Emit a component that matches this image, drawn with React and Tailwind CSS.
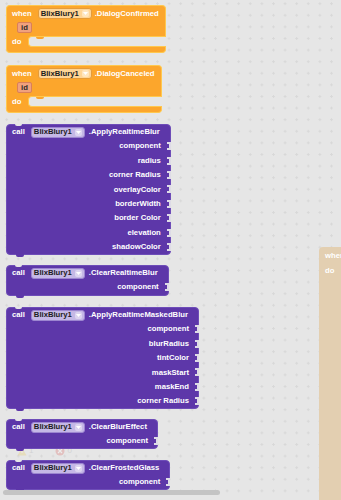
import React from 'react';

const Arrow = () => (
  <span className="ml-[3px] flex h-[7px] w-[7px] items-center justify-center rounded-[2px] bg-white/40">
    <svg width="5" height="3" viewBox="0 0 5 3">
      <path d="M0 0h5L2.5 3z" fill="#ffffff" />
    </svg>
  </span>
);

const Pill = ({ tone }) => (
  <span
    className={
      tone === 'orange'
        ? 'ml-[6px] inline-flex h-[11px] items-center rounded-[3px] border border-[#e49b3a] bg-[#ffd596] pl-[2px] pr-[2px]'
        : 'ml-[6px] inline-flex h-[11px] items-center rounded-[3px] border border-[#9c86d0] bg-[#c5b8e6] pl-[2px] pr-[2px]'
    }
  >
    <span className="text-[#1e1e1e]">BlixBlury1</span>
    <Arrow />
  </span>
);

const EventBlock = ({ event, className }) => (
  <div className={`inline-flex flex-col self-start ${className}`}>
    <div className="flex flex-col rounded-t-[4px] border border-b-0 border-[#ffc84e] bg-[#fca62c] pb-[3px] pl-[5px] pr-[6px] pt-[2px]">
      <div className="flex h-[11px] items-center whitespace-nowrap">
        <span>when</span>
        <Pill tone="orange" />
        <span className="ml-[3px]">{event}</span>
      </div>
      <div className="mt-[3px] flex h-[11px] items-center pl-[5px]">
        <span className="flex h-[11px] items-center rounded-[2px] border border-[#d97f5a] bg-[#f0a17d] px-[3px] text-[#2a2a2a]">
          id
        </span>
      </div>
    </div>
    <div className="flex h-[11px] bg-[#fca62c]">
      <div className="flex w-[22px] items-center border-l border-[#ffc84e] pl-[5px]">do</div>
      <div className="relative flex-1 rounded-l-[4px] border-y border-l border-[#ffc84e] bg-[#e6e6e6]">
        <div className="absolute left-[7px] top-0 h-[2px] w-[8px] rounded-b-full bg-[#fca62c]" />
      </div>
    </div>
    <div className="h-[6px] rounded-b-[4px] border border-t-0 border-[#ffc84e] bg-[#fca62c]" />
  </div>
);

const Socket = () => (
  <span className="-mr-[1px] flex h-[8px] w-[4px] items-center bg-[#dedbe6]">
    <span className="h-[4px] w-[2px] bg-[#5d37a9]" />
  </span>
);

const CallBlock = ({ method, params, className }) => (
  <div
    className={`relative inline-flex flex-col self-start rounded-[4px] border border-[#6e4db8] bg-[#5d37a9] ${className}`}
  >
    <div className="absolute -top-[1px] left-[8px] h-[2px] w-[7px] rounded-b-[2px] bg-[#e6e6e6]" />
    <div className="flex h-[14px] items-center whitespace-nowrap pl-[5px] pr-[10px]">
      <span>call</span>
      <Pill />
      <span className="ml-[4px]">{method}</span>
    </div>
    {params.map((p) => (
      <div key={p} className="flex h-[14.4px] items-center justify-end whitespace-nowrap">
        <span className="mr-[6px]">{p}</span>
        <Socket />
      </div>
    ))}
    <div className="absolute -bottom-[3px] left-[9px] h-[3px] w-[8px] rounded-b-[2px] bg-[#5d37a9]" />
  </div>
);

const Warnings = () => (
  <div className="absolute left-[17px] top-[446px] z-0 flex items-center gap-[22px] text-[8px] font-normal text-[#9a9a9a] opacity-25">
    <div className="flex items-center gap-[2px]">
      <svg width="10" height="9" viewBox="0 0 10 9">
        <path d="M5 0.5 9.5 8.5H0.5z" fill="#e8c447" />
        <rect x="4.5" y="3" width="1" height="3" fill="#fff" />
      </svg>
      <span>1</span>
    </div>
    <div className="flex items-center gap-[2px]">
      <svg width="10" height="10" viewBox="0 0 10 10">
        <circle cx="5" cy="5" r="4.5" fill="#d9534f" />
        <path d="M3 3l4 4M7 3l-4 4" stroke="#fff" strokeWidth="1.2" />
      </svg>
      <span>0</span>
    </div>
  </div>
);

export default function App() {
  return (
    <div className="relative h-[500px] w-[341px] overflow-hidden bg-[#e6e6e6] font-['Liberation_Sans',Arial,sans-serif] text-[7.7px] font-bold leading-none text-white">
      <svg className="absolute inset-0 h-full w-full" aria-hidden="true">
        <defs>
          <pattern id="grid" x="5.2" y="2.2" width="11.6" height="11.6" patternUnits="userSpaceOnUse">
            <rect x="0" y="1" width="3" height="1" fill="#d8d8d8" />
            <rect x="1" y="0" width="1" height="3" fill="#d8d8d8" />
          </pattern>
        </defs>
        <rect width="100%" height="100%" fill="url(#grid)" />
      </svg>

      <Warnings />

      <div className="absolute bottom-0 left-[319px] top-[247px] w-[40px] rounded-tl-[4px] bg-[#e3cfb1] pl-[6px] pt-[3px]">
        <div className="flex h-[11px] items-center">when</div>
        <div className="mt-[4px] flex h-[11px] items-center">do</div>
      </div>

      <div className="relative z-10 flex flex-col pl-[6px]">
        <EventBlock event=".DialogConfirmed" className="mt-[5px]" />
        <EventBlock event=".DialogCanceled" className="mt-[12px]" />
        <CallBlock
          className="mt-[11px]"
          method=".ApplyRealtimeBlur"
          params={[
            'component',
            'radius',
            'corner Radius',
            'overlayColor',
            'borderWidth',
            'border Color',
            'elevation',
            'shadowColor',
          ]}
        />
        <CallBlock className="mt-[10px]" method=".ClearRealtimeBlur" params={['component']} />
        <CallBlock
          className="mt-[11.6px]"
          method=".ApplyRealtimeMaskedBlur"
          params={['component', 'blurRadius', 'tintColor', 'maskStart', 'maskEnd', 'corner Radius']}
        />
        <CallBlock className="mt-[9.6px]" method=".ClearBlurEffect" params={['component']} />
        <CallBlock className="mt-[10.6px]" method=".ClearFrostedGlass" params={['component']} />
      </div>

      <div className="absolute left-[3px] top-[490px] z-20 h-[5px] w-[217px] rounded-full bg-[#c4c4c4]" />
    </div>
  );
}
